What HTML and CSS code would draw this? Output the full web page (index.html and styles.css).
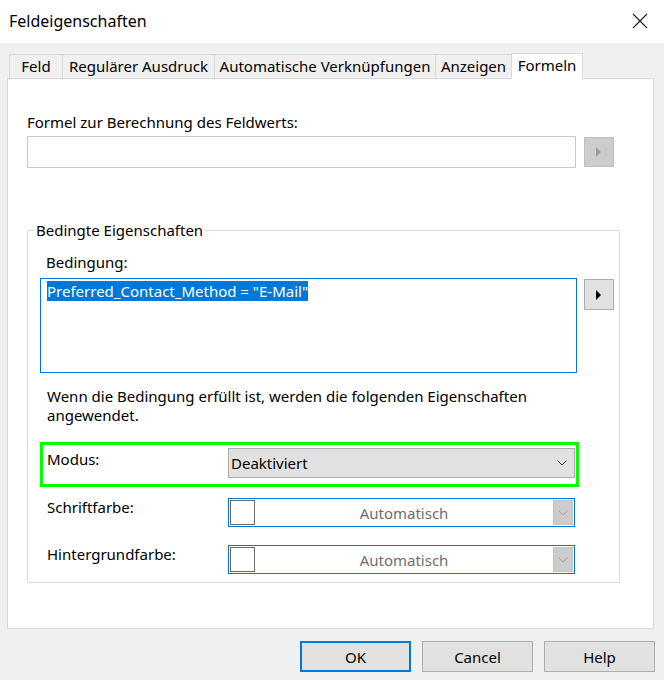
FILE: index.html
```html
<!DOCTYPE html>
<html lang="de">
<head>
<meta charset="utf-8">
<title>Feldeigenschaften</title>
<link rel="stylesheet" href="styles.css">
</head>
<body>
<div class="dialog">
  <div class="titlebar">
    <span class="title">Feldeigenschaften</span>
    <svg class="close" width="16" height="16" viewBox="0 0 16 16"><path d="M1 1 L15 15 M15 1 L1 15" stroke="#222" stroke-width="1.2" fill="none"/></svg>
  </div>
  <div class="tabs">
    <div class="tab t1">Feld</div>
    <div class="tab t2">Regulärer Ausdruck</div>
    <div class="tab t3">Automatische Verknüpfungen</div>
    <div class="tab t4">Anzeigen</div>
    <div class="tab active">Formeln</div>
  </div>
  <div class="panel">
    <div class="lbl formula-lbl">Formel zur Berechnung des Feldwerts:</div>
    <div class="formula-row">
      <div class="input"></div>
      <div class="arrow-btn disabled"><svg width="6" height="10" viewBox="0 0 6 10"><path d="M0 0 L5 5 L0 10 Z" fill="#9a9a9a"/></svg></div>
    </div>
    <fieldset class="group">
      <legend>Bedingte Eigenschaften</legend>
      <div class="lbl cond-lbl">Bedingung:</div>
      <div class="cond-row">
        <div class="cond-box"><span class="sel">Preferred_Contact_Method = "E-Mail"</span></div>
        <div class="arrow-btn"><svg width="6" height="10" viewBox="0 0 6 10"><path d="M0 0 L5 5 L0 10 Z" fill="#000"/></svg></div>
      </div>
      <p class="desc">Wenn die Bedingung erfüllt ist, werden die folgenden Eigenschaften angewendet.</p>
      <div class="modus">
        <span class="lbl">Modus:</span>
        <div class="select"><span>Deaktiviert</span><svg width="10" height="6" viewBox="0 0 10 6"><path d="M0.5 0.5 L5 5 L9.5 0.5" stroke="#333" stroke-width="1" fill="none"/></svg></div>
      </div>
      <div class="color-row">
        <span class="lbl">Schriftfarbe:</span>
        <div class="combo"><span class="swatch"></span><span class="ctext">Automatisch</span><span class="cbtn"><svg width="10" height="6" viewBox="0 0 10 6"><path d="M0.5 0.5 L5 5 L9.5 0.5" stroke="#a0a0a0" stroke-width="1" fill="none"/></svg></span></div>
      </div>
      <div class="color-row">
        <span class="lbl">Hintergrundfarbe:</span>
        <div class="combo"><span class="swatch"></span><span class="ctext">Automatisch</span><span class="cbtn"><svg width="10" height="6" viewBox="0 0 10 6"><path d="M0.5 0.5 L5 5 L9.5 0.5" stroke="#a0a0a0" stroke-width="1" fill="none"/></svg></span></div>
      </div>
    </fieldset>
  </div>
  <div class="footer">
    <button class="btn default">OK</button>
    <button class="btn">Cancel</button>
    <button class="btn">Help</button>
  </div>
</div>
</body>
</html>
```
FILE: styles.css
```css
* { box-sizing: border-box; }
html, body { margin: 0; padding: 0; }
body {
  width: 664px; height: 680px; overflow: hidden;
  background: #f0f0f0;
  font-family: "Noto Sans", "Open Sans", sans-serif;
  font-size: 14px;
  color: #000;
}
.dialog { width: 664px; height: 680px; }
.titlebar {
  height: 43px; background: #fff;
  display: flex; align-items: center; justify-content: space-between;
  padding: 0 16px 2px 9px;
}
.title { font-size: 16px; }
.tabs {
  display: flex; align-items: flex-end;
  height: 35px; padding-left: 9px;
}
.tab {
  height: 24px; line-height: 22px;
  border: 1px solid #d9d9d9; border-right: none; border-bottom: none;
  background: #f0f0f0;
  text-align: center; font-size: 15px;
}
.t1 { width: 53px; }
.t2 { width: 152px; }
.t3 { width: 221px; }
.t4 { width: 76px; }
.tab.active {
  width: 72px; height: 26px; background: #fff;
  border-right: 1px solid #d9d9d9; margin-bottom: -1px; position: relative;
  line-height: 22px;
}
.panel {
  width: 647px; height: 551px; margin-left: 7px;
  background: #fff; border: 1px solid #d9d9d9;
  padding: 0 0 0 19px;
}
.lbl { font-size: 15px; }
.formula-lbl { margin-top: 33px; height: 24px; }
.formula-row { display: flex; align-items: flex-start; height: 32px; }
.input { width: 549px; height: 32px; border: 1px solid #c8c8c8; background: #fff; }
.arrow-btn {
  width: 30px; height: 31px; margin-left: 8px; margin-top: 1px;
  background: #e1e1e1; border: 1px solid #adadad;
  display: flex; align-items: center; justify-content: center;
}
.arrow-btn.disabled { background: #cccccc; border-color: #bfbfbf; margin-top: 1px; height: 30px; }
.group {
  margin: 53px 0 0 0; padding: 0 0 0 12px;
  width: 593px; height: 362px;
  border: 1px solid #dcdcdc;
}
.group legend { font-size: 15px; padding: 0 2px; margin-left: -6px; line-height: 18px; }
.cond-lbl { margin: 11px 0 0 6px; height: 28px; line-height: 24px; }
.cond-row { display: flex; align-items: flex-start; margin-left: 0; }
.cond-box {
  width: 537px; height: 95px; border: 1px solid #0078d7;
  padding: 2px 0 0 6px; font-size: 15px; line-height: 21px;
}
.sel { background: #0078d7; color: #fff; }
.cond-row .arrow-btn { margin-left: 7px; }
.desc { margin: 14px 0 0 7px; width: 500px; font-size: 15px; line-height: 19px; }
.modus {
  margin-top: 17px; width: 539px; height: 45px;
  border: 3px solid #00ff00;
  display: grid; grid-template-columns: 181px 347px; align-items: start;
  padding: 3px 0 0 4px;
}
.modus .lbl { line-height: 20px; padding-top: 1px; }
.select {
  height: 30px; background: #e1e1e1; border: 1px solid #adadad;
  display: flex; align-items: center; justify-content: space-between;
  padding: 0 7px 0 2px; font-size: 15px;
}
.color-row {
  display: grid; grid-template-columns: 181px 347px; align-items: start;
  margin: 11px 0 0 7px; height: 29px;
}
.color-row + .color-row { margin-top: 18px; }
.color-row .lbl { line-height: 18px; }
.combo {
  height: 29px; border: 1px solid #0078d7; background: #fff;
  display: flex; align-items: center; padding: 0 1px;
}
.swatch { width: 25px; height: 25px; border: 1px solid #6b6b6b; background: #fff; flex: none; }
.ctext { flex: 1; text-align: center; color: #6d6d6d; font-size: 15px; }
.cbtn {
  width: 20px; height: 25px; background: #cccccc; border: 1px solid #c4c4c4;
  display: flex; align-items: center; justify-content: center;
}
.footer {
  display: flex; justify-content: flex-end; gap: 11px;
  padding: 12px 9px 0 0;
}
.btn {
  width: 111px; height: 31px;
  background: #e1e1e1; border: 1px solid #adadad;
  font-family: inherit; font-size: 15px; color: #000; padding: 0;
}
.btn.default { border: 2px solid #0078d7; }
```
